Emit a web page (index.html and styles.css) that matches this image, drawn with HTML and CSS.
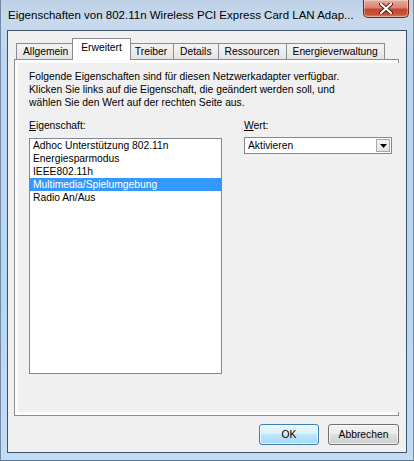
FILE: index.html
```html
<!DOCTYPE html>
<html lang="de">
<head>
<meta charset="utf-8">
<title>Eigenschaften</title>
<link rel="stylesheet" href="styles.css">
</head>
<body>
<div class="window">
  <div class="titlebar">
    <span class="title">Eigenschaften von 802.11n Wireless PCI Express Card LAN Adap...</span>
    <div class="close">
      <svg width="14" height="11" viewBox="0 0 14 11">
        <path d="M2 1 L12 10 M12 1 L2 10" stroke="#4a1a12" stroke-width="4" stroke-linecap="round" fill="none"/>
        <path d="M2 1 L12 10 M12 1 L2 10" stroke="#ffffff" stroke-width="2.2" stroke-linecap="round" fill="none"/>
      </svg>
    </div>
  </div>
  <div class="client">
    <div class="tabs">
      <div class="tab">Allgemein</div>
      <div class="tab active">Erweitert</div>
      <div class="tab">Treiber</div>
      <div class="tab">Details</div>
      <div class="tab">Ressourcen</div>
      <div class="tab">Energieverwaltung</div>
    </div>
    <div class="panel">
      <div class="page">
        <p class="desc">Folgende Eigenschaften sind für diesen Netzwerkadapter verfügbar.<br>Klicken Sie links auf die Eigenschaft, die geändert werden soll, und<br>wählen Sie den Wert auf der rechten Seite aus.</p>
        <div class="cols">
          <div class="col-left">
            <div class="label"><u>E</u>igenschaft:</div>
            <div class="listbox">
              <div class="item">Adhoc Unterstützung 802.11n</div>
              <div class="item">Energiesparmodus</div>
              <div class="item">IEEE802.11h</div>
              <div class="item selected">Multimedia/Spielumgebung</div>
              <div class="item">Radio An/Aus</div>
            </div>
          </div>
          <div class="col-right">
            <div class="label"><u>W</u>ert:</div>
            <div class="combo">
              <span class="combo-text">Aktivieren</span>
              <div class="dd">
                <svg width="7" height="4" viewBox="0 0 7 4"><path d="M0 0 H7 L3.5 4 Z" fill="#000"/></svg>
              </div>
            </div>
          </div>
        </div>
      </div>
    </div>
    <div class="buttons">
      <div class="btn default">OK</div>
      <div class="btn cancel">Abbrechen</div>
    </div>
  </div>
</div>
</body>
</html>
```
FILE: styles.css
```css
* { box-sizing: border-box; }
html, body { margin: 0; padding: 0; background: #ffffff; }
body { font-family: "Liberation Sans", Arial, sans-serif; font-size: 10.3px; color: #000; }

.window {
  width: 414px;
  height: 461px;
  display: flex;
  flex-direction: column;
  padding: 0 7px 7px 7px;
  background: linear-gradient(180deg, #bccfe5 0px, #c8d9ec 20px, #bcd6ef 60px, #b9d6f1 300px, #c2dcf3 461px);
  border-left: 1px solid #6f8aa6;
  border-right: 1px solid #6f8aa6;
  border-bottom: 1px solid #5b7590;
  padding-left: 6px;
  padding-right: 6px;
  position: relative;
}

.titlebar {
  height: 30px;
  display: flex;
  align-items: flex-start;
  justify-content: space-between;
  flex-shrink: 0;
}
.title {
  font-size: 11.5px;
  margin-top: 9px;
  margin-left: 1px;
  white-space: nowrap;
  color: #000;
}
.close {
  width: 46px;
  height: 18px;
  margin-right: -2px;
  border: 1px solid #6b2a1f;
  border-top: none;
  border-radius: 0 0 5px 5px;
  background: linear-gradient(180deg, #e9a99b 0%, #d98472 45%, #c5452f 55%, #c9543c 85%, #de8a6e 100%);
  display: flex;
  align-items: center;
  justify-content: center;
  box-shadow: inset 0 0 0 1px rgba(255,255,255,0.35);
}

.client {
  flex: 1;
  display: flex;
  flex-direction: column;
  background: #f0f0f0;
  border: 1px solid #3e5369;
  padding: 7px 7px 7px 6px;
}

.tabs {
  display: flex;
  align-items: flex-end;
  height: 21px;
  padding-left: 2px;
  flex-shrink: 0;
  position: relative;
  z-index: 1;
}
.tab {
  height: 16px;
  line-height: 15px;
  padding: 0 6px;
  border: 1px solid #898c95;
  border-bottom: none;
  border-right: none;
  background: linear-gradient(180deg, #f2f2f2 0%, #ebebeb 50%, #dddddd 51%, #cfcfcf 100%);
  background: linear-gradient(180deg, #f3f3f3 0%, #ececec 50%, #e3e3e3 100%);
  white-space: nowrap;
}
.tab:last-child { border-right: 1px solid #898c95; }
.tab.active {
  height: 22px;
  margin: 0 -2px -1px -2px;
  padding: 0 8px;
  line-height: 17px;
  background: #ffffff;
  border-right: 1px solid #898c95;
  position: relative;
  z-index: 2;
}
.tab.active + .tab { border-left: none; }

.panel {
  flex: 1;
  border: 1px solid #898c95;
  background: #fcfcfc;
  padding: 3px;
  display: flex;
}
.page {
  flex: 1;
  background: #f0f0f0;
  padding: 7px 10px 0 11px;
}
.desc {
  margin: 0;
  line-height: 13px;
  white-space: nowrap;
}
.cols {
  display: flex;
  gap: 22px;
  margin-top: 10px;
}
.col-left { width: 193px; }
.col-right { width: 148px; }
.label {
  line-height: 13px;
  margin-bottom: 6px;
}
.label u { text-decoration: underline; text-underline-offset: 1px; }

.listbox {
  height: 236px;
  background: #ffffff;
  border: 1px solid #828790;
  padding-top: 0;
}
.item {
  height: 13px;
  line-height: 13px;
  padding-left: 3px;
  white-space: nowrap;
}
.item.selected {
  background: #3399ff;
  color: #ffffff;
}

.combo {
  height: 17px;
  margin-top: -1px;
  background: #ffffff;
  border: 1px solid #828790;
  display: flex;
  align-items: center;
  justify-content: space-between;
  padding: 1px 1px 1px 3px;
}
.combo-text { line-height: 13px; }
.dd {
  width: 14px;
  height: 13px;
  border: 1px solid #a7a7a7;
  background: linear-gradient(180deg, #f6f6f6, #e3e3e3);
  display: flex;
  align-items: center;
  justify-content: center;
}

.buttons {
  display: flex;
  justify-content: flex-end;
  gap: 9px;
  margin-top: 8px;
  flex-shrink: 0;
}
.btn {
  height: 21px;
  line-height: 19px;
  text-align: center;
  border-radius: 3px;
  border: 1px solid #707070;
  background: linear-gradient(180deg, #f2f2f2 0%, #ebebeb 49%, #dddddd 50%, #cfcfcf 100%);
  box-shadow: inset 0 0 0 1px rgba(255,255,255,0.7);
}
.btn.default {
  width: 60px;
  border-color: #3c7fb1;
  background: linear-gradient(180deg, #eaf6fd 0%, #d9f0fc 49%, #bee6fd 50%, #a7d9f5 100%);
}
.btn.cancel { width: 71px; }
```
